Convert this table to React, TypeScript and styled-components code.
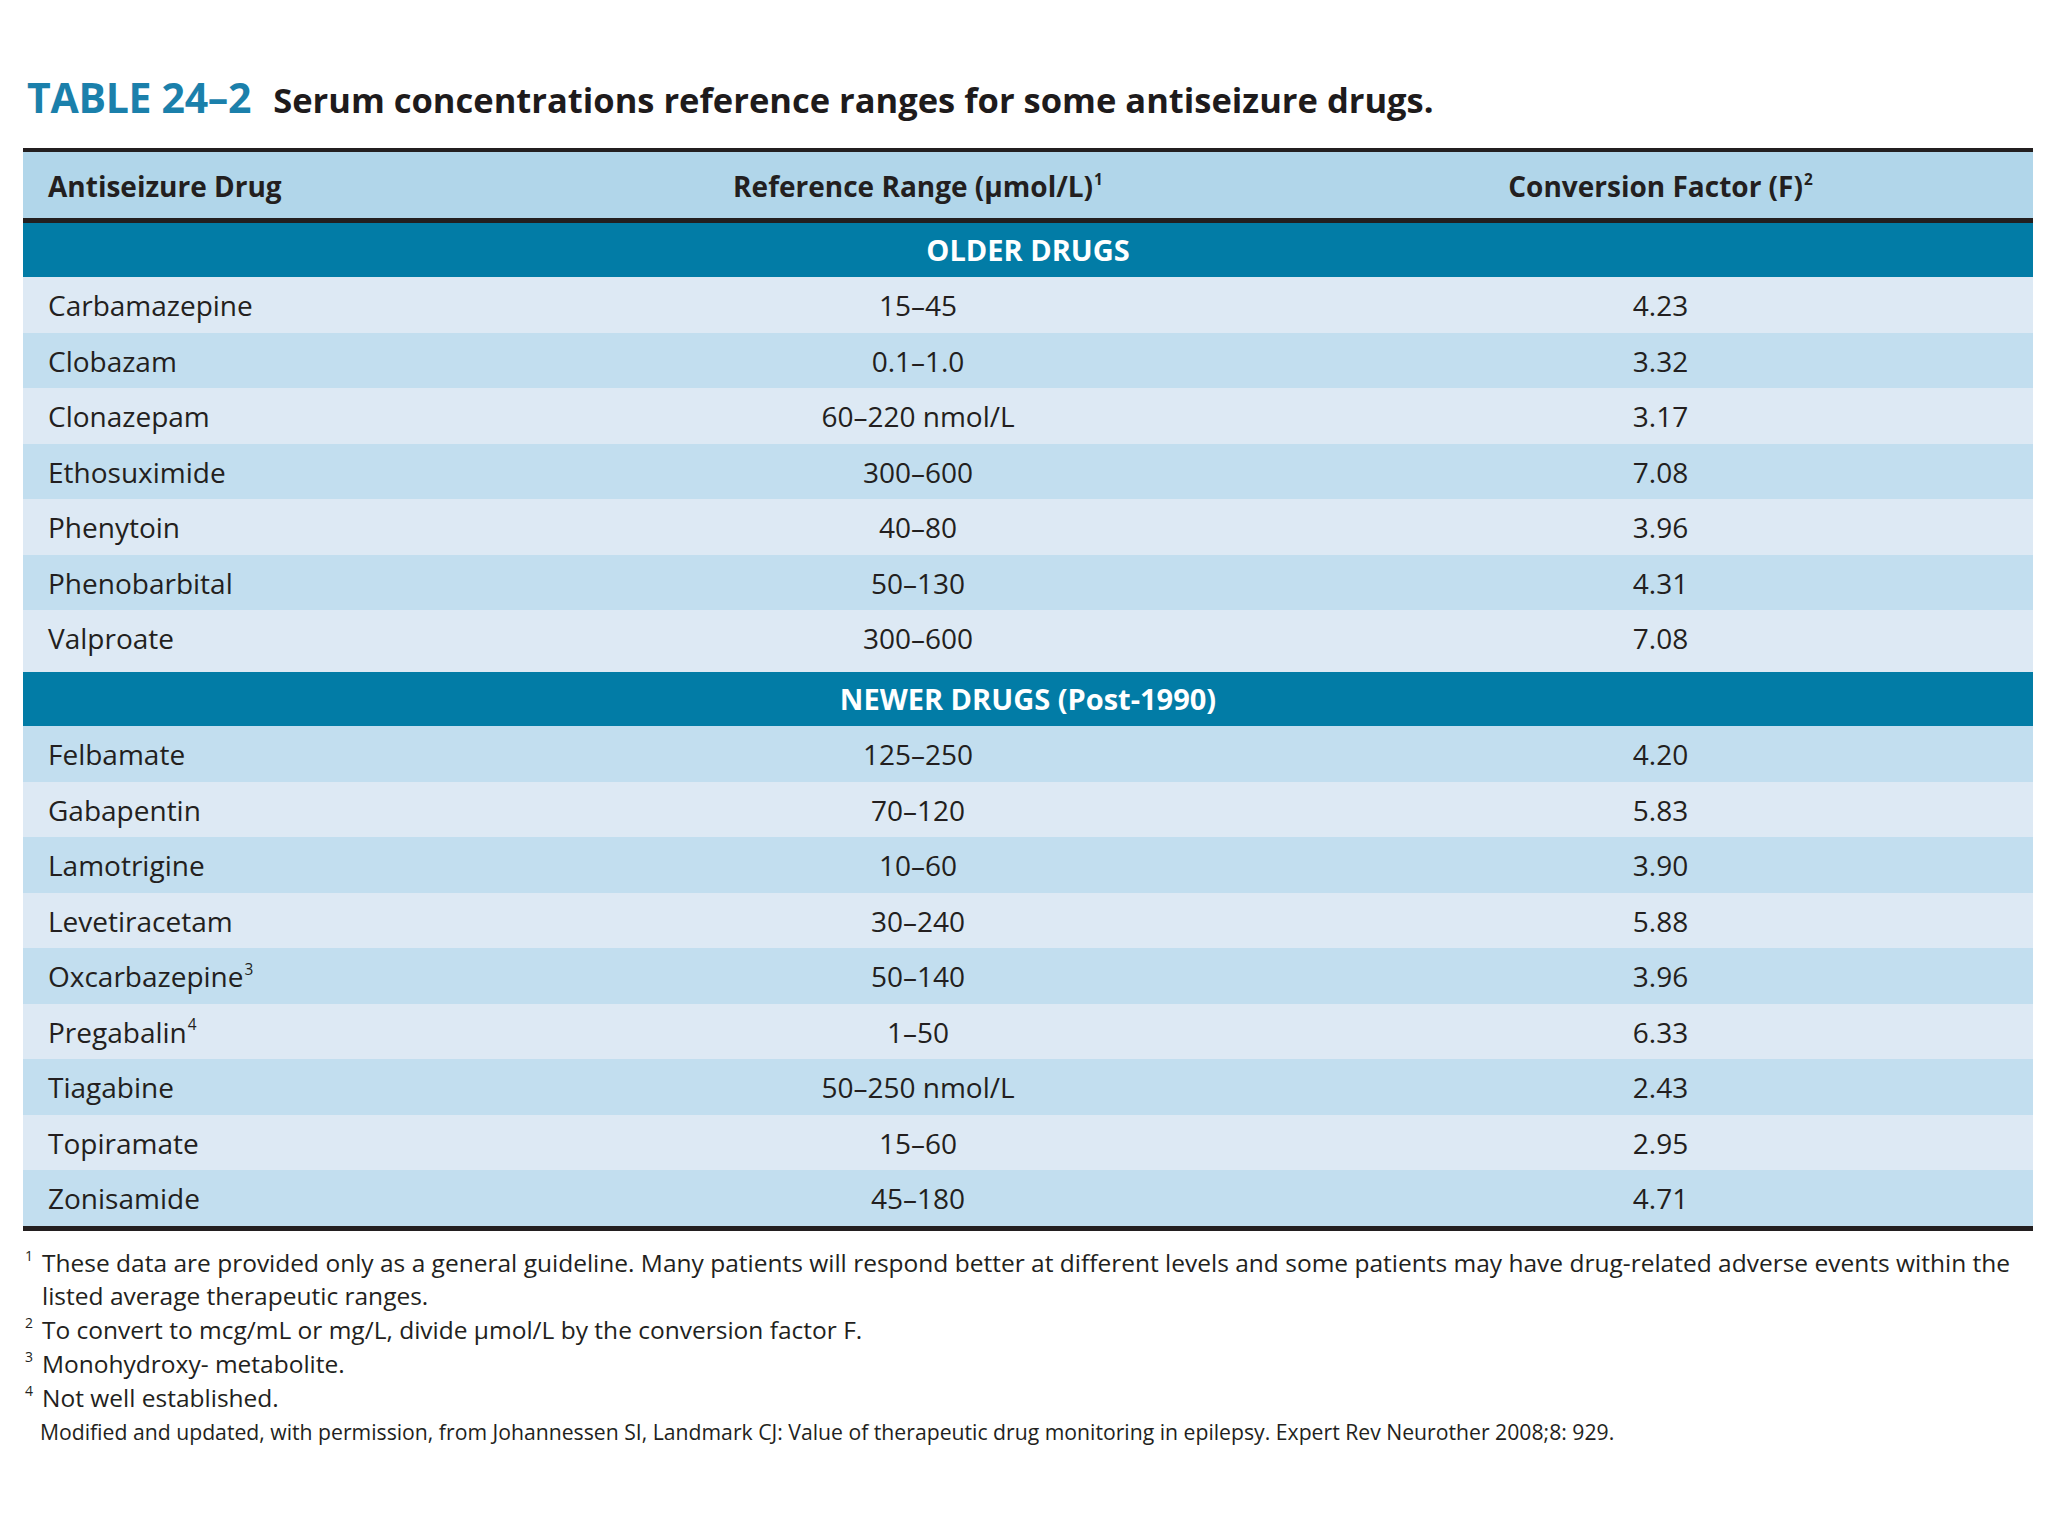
import React from 'react';
import styled, { createGlobalStyle } from 'styled-components';

const GlobalStyle = createGlobalStyle`
    html, body {
        margin: 0;
        padding: 0;
        background: #ffffff;
    }
    body {
        font-family: 'Open Sans', 'Liberation Sans', sans-serif;
        color: #231f20;
    }
`;

const COLUMNS = '525px 740px 1fr';

const Page = styled.div`
    width: 2010px;
    padding: 77px 0 60px 23px;
`;

const Title = styled.div`
    display: flex;
    align-items: baseline;
    gap: 22px;
    line-height: 40px;
    margin-bottom: 28px;
    padding-left: 4px;
`;

const TableNo = styled.span`
    font-size: 41px;
    font-weight: 700;
    color: #1b80ab;
    letter-spacing: -0.3px;
`;

const Caption = styled.span`
    font-size: 34.5px;
    font-weight: 700;
    color: #1e1b1c;
`;

const Table = styled.div`
    border-top: 4px solid #231f20;
    border-bottom: 5px solid #231f20;
`;

const HeaderRow = styled.div`
    display: grid;
    grid-template-columns: ${COLUMNS};
    height: 66px;
    background: #b1d6ea;
    border-bottom: 5px solid #231f20;
    font-size: 28px;
    font-weight: 700;
    line-height: 68px;
`;

const Band = styled.div`
    height: 54px;
    line-height: 54px;
    background: #027ca6;
    color: #ffffff;
    text-align: center;
    font-size: 29px;
    font-weight: 700;
`;

const Row = styled.div<{ $dark: boolean; $extra?: number }>`
    display: grid;
    grid-template-columns: ${COLUMNS};
    height: ${(p) => 55.5 + (p.$extra || 0)}px;
    align-items: start;
    background: ${(p) => (p.$dark ? '#c2deef' : '#dde9f4')};
    font-size: 28px;
    line-height: 56px;
`;

const Cell = styled.div<{ $first?: boolean }>`
    padding-left: ${(p) => (p.$first ? '25px' : '0')};
    text-align: ${(p) => (p.$first ? 'left' : 'center')};
    white-space: nowrap;
`;

const Sup = styled.sup`
    font-size: 0.55em;
    vertical-align: 0;
    position: relative;
    top: -0.8em;
    margin-left: 1px;
`;

const Notes = styled.div`
    margin-top: 15px;
    font-size: 24.5px;
    line-height: 33.8px;
`;

const Note = styled.div`
    display: flex;
`;

const Marker = styled.span`
    flex: 0 0 17px;
    font-size: 14px;
    line-height: 14px;
    padding-top: 3px;
    padding-left: 2px;
`;

const NoteText = styled.span`
    flex: 1;
`;

const Source = styled.div`
    margin-top: 1px;
    padding-left: 17px;
    font-size: 21.2px;
    line-height: 34px;
`;

type Drug = [string, string, string, string?];

const OLDER: Drug[] = [
    ['Carbamazepine', '15–45', '4.23'],
    ['Clobazam', '0.1–1.0', '3.32'],
    ['Clonazepam', '60–220 nmol/L', '3.17'],
    ['Ethosuximide', '300–600', '7.08'],
    ['Phenytoin', '40–80', '3.96'],
    ['Phenobarbital', '50–130', '4.31'],
    ['Valproate', '300–600', '7.08'],
];

const NEWER: Drug[] = [
    ['Felbamate', '125–250', '4.20'],
    ['Gabapentin', '70–120', '5.83'],
    ['Lamotrigine', '10–60', '3.90'],
    ['Levetiracetam', '30–240', '5.88'],
    ['Oxcarbazepine', '50–140', '3.96', '3'],
    ['Pregabalin', '1–50', '6.33', '4'],
    ['Tiagabine', '50–250 nmol/L', '2.43'],
    ['Topiramate', '15–60', '2.95'],
    ['Zonisamide', '45–180', '4.71'],
];

const NOTES: [string, string][] = [
    [
        '1',
        'These data are provided only as a general guideline. Many patients will respond better at different levels and some patients may have drug-related adverse events within the listed average therapeutic ranges.',
    ],
    ['2', 'To convert to mcg/mL or mg/L, divide µmol/L by the conversion factor F.'],
    ['3', 'Monohydroxy- metabolite.'],
    ['4', 'Not well established.'],
];

function Group({
    title,
    drugs,
    darkFirst,
    lastExtra,
}: {
    title: string;
    drugs: Drug[];
    darkFirst: boolean;
    lastExtra?: number;
}) {
    return (
        <>
            <Band>{title}</Band>
            {drugs.map(([name, range, factor, note], i) => (
                <Row
                    key={name}
                    $dark={darkFirst ? i % 2 === 0 : i % 2 === 1}
                    $extra={i === drugs.length - 1 ? lastExtra : 0}
                >
                    <Cell $first>
                        {name}
                        {note && <Sup>{note}</Sup>}
                    </Cell>
                    <Cell>{range}</Cell>
                    <Cell>{factor}</Cell>
                </Row>
            ))}
        </>
    );
}

export default function App() {
    return (
        <Page>
            <GlobalStyle />
            <Title>
                <TableNo>TABLE 24–2</TableNo>
                <Caption>Serum concentrations reference ranges for some antiseizure drugs.</Caption>
            </Title>
            <Table>
                <HeaderRow>
                    <Cell $first>Antiseizure Drug</Cell>
                    <Cell>
                        Reference Range (µmol/L)<Sup>1</Sup>
                    </Cell>
                    <Cell>
                        Conversion Factor (F)<Sup>2</Sup>
                    </Cell>
                </HeaderRow>
                <Group title="OLDER DRUGS" drugs={OLDER} darkFirst={false} lastExtra={6.5} />
                <Group title="NEWER DRUGS (Post-1990)" drugs={NEWER} darkFirst />
            </Table>
            <Notes>
                {NOTES.map(([n, text]) => (
                    <Note key={n}>
                        <Marker>{n}</Marker>
                        <NoteText>{text}</NoteText>
                    </Note>
                ))}
            </Notes>
            <Source>
                Modified and updated, with permission, from Johannessen SI, Landmark CJ: Value of
                therapeutic drug monitoring in epilepsy. Expert Rev Neurother 2008;8: 929.
            </Source>
        </Page>
    );
}
